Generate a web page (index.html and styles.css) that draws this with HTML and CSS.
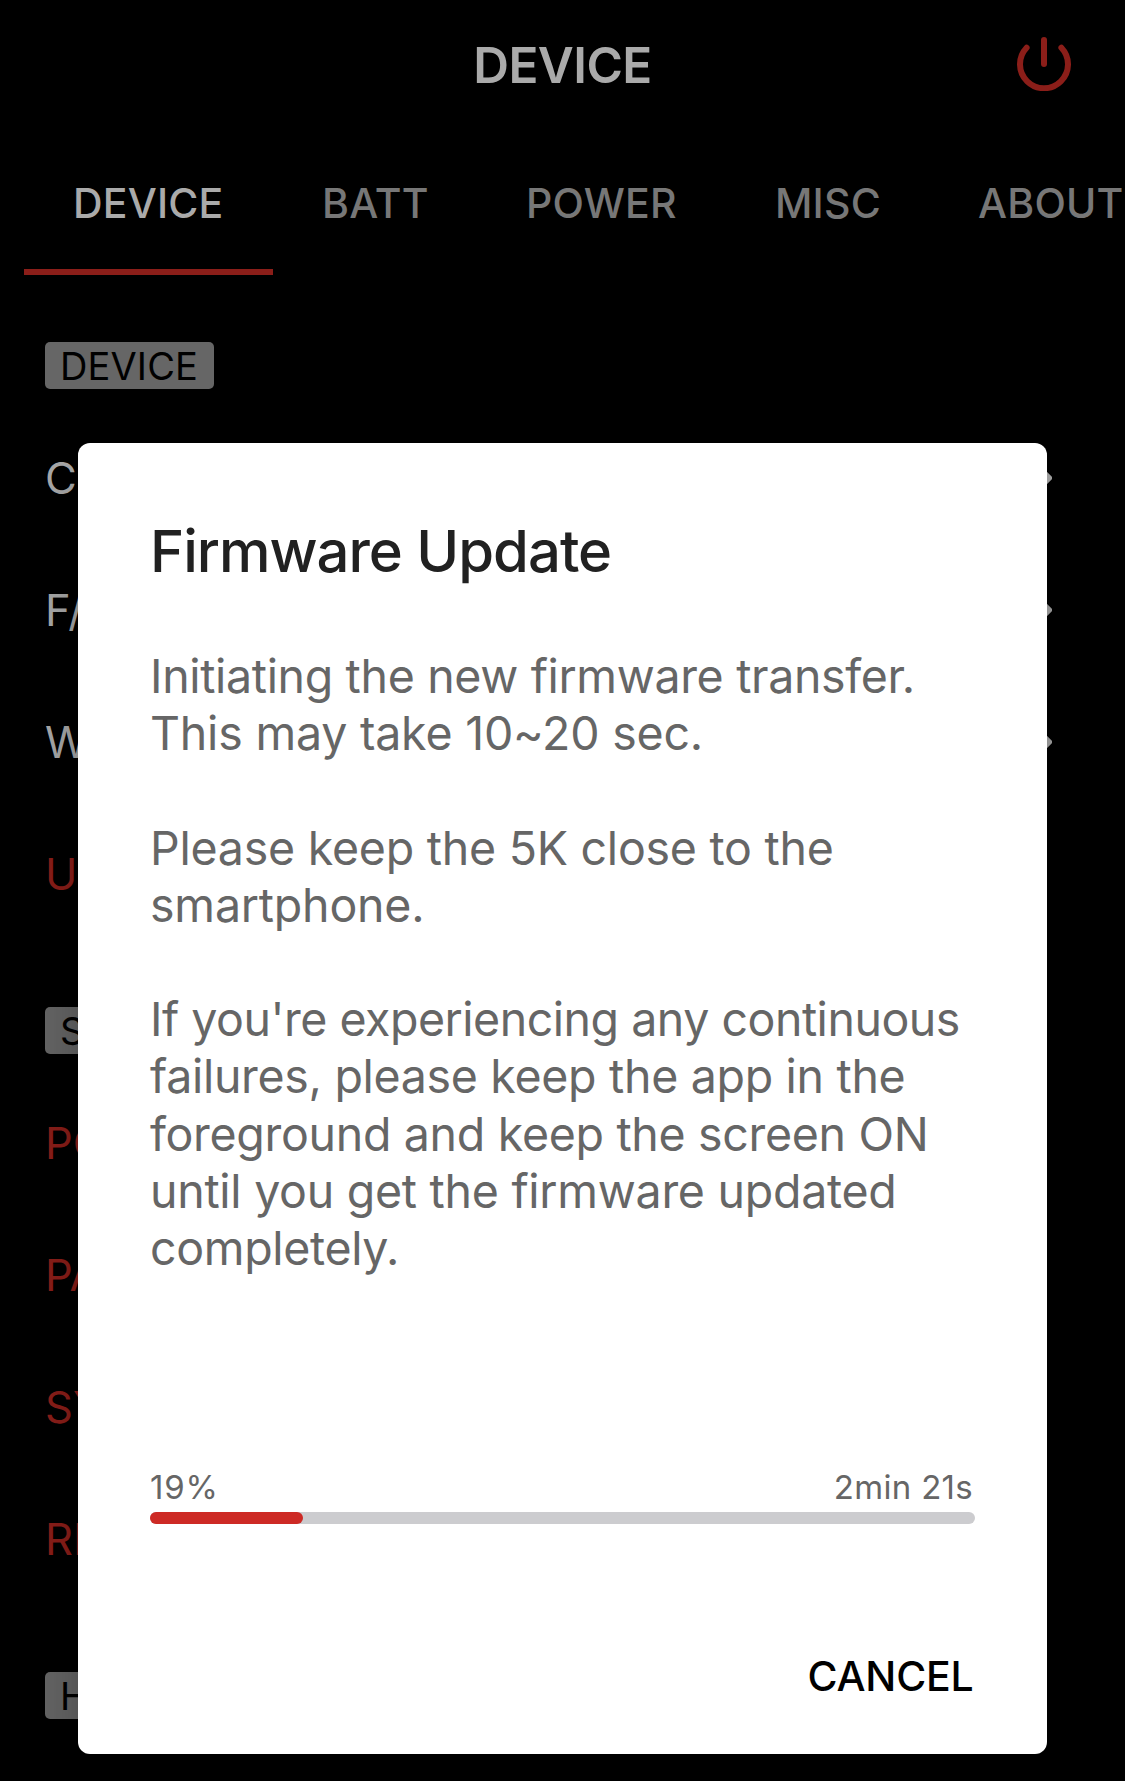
FILE: index.html
```html
<!DOCTYPE html>
<html lang="en">
<head>
<meta charset="utf-8">
<title>Device</title>
<link rel="stylesheet" href="styles.css">
</head>
<body>
<div class="screen">
  <header class="header">
    <h1 class="header-title">DEVICE</h1>
    <svg class="power" viewBox="0 0 54 54" width="54" height="54" fill="none" stroke="#8b1e19" stroke-width="6" stroke-linecap="round">
      <path d="M9.6 10.7A24 24 0 1 0 44.4 10.7"/>
      <path d="M27 3V27"/>
    </svg>
  </header>
  <nav class="tabs">
    <a class="tab tab-wide tab-active">DEVICE</a>
    <a class="tab tab-batt">BATT</a>
    <a class="tab tab-wide">POWER</a>
    <a class="tab tab-misc">MISC</a>
    <a class="tab tab-about">ABOUT</a>
  </nav>
  <main class="content">
    <section class="group">
      <h2 class="badge">DEVICE</h2>
      <div class="row"><span>C</span><svg class="chevron" viewBox="0 0 18 32" width="18" height="32"><path d="M2.5 3.5L15 16L2.5 28.5"/></svg></div>
      <div class="row row-tight"><span>F/</span><svg class="chevron" viewBox="0 0 18 32" width="18" height="32"><path d="M2.5 3.5L15 16L2.5 28.5"/></svg></div>
      <div class="row"><span>W</span><svg class="chevron" viewBox="0 0 18 32" width="18" height="32"><path d="M2.5 3.5L15 16L2.5 28.5"/></svg></div>
      <div class="row row-red"><span>U</span></div>
    </section>
    <section class="group">
      <h2 class="badge">S</h2>
      <div class="row row-red"><span>PO</span></div>
      <div class="row row-red"><span>PA</span></div>
      <div class="row row-red"><span>SY</span></div>
      <div class="row row-red"><span>RE</span></div>
    </section>
    <section class="group">
      <h2 class="badge">H</h2>
    </section>
  </main>

  <div class="dialog" role="dialog">
    <h2 class="dialog-title">Firmware Update</h2>
    <div class="message">
      <p><span class="ls-34">Initiating the new firmware transfer.</span><br><span class="ls-20">This may take 10~20 sec.</span></p>
      <p><span class="ls-24">Please keep the 5K close to the</span><br><span class="ls-20">smartphone.</span></p>
      <p><span class="ls-48">If you're experiencing any continuous</span><br><span class="ls-31">failures, please keep the app in the</span><br><span class="ls-31">foreground and keep the screen ON</span><br><span class="ls-27">until you get the firmware updated</span><br><span class="ls-34">completely.</span></p>
    </div>
    <div class="progress-info"><span class="percent">19%</span><span class="remaining">2min 21s</span></div>
    <div class="progress"><div class="progress-fill"></div></div>
    <button class="cancel">CANCEL</button>
  </div>
</div>
</body>
</html>
```
FILE: styles.css
```css
* { box-sizing: border-box; }
body, h1, h2, p { margin: 0; }
body {
  background: #000;
  font-family: Inter, "Liberation Sans", sans-serif;
}
.screen {
  position: relative;
  width: 1125px;
  height: 1781px;
  overflow: hidden;
  background: #000;
}

/* Header */
.header {
  display: grid;
  grid-template-columns: 1fr auto 1fr;
  align-items: center;
  height: 130px;
  padding: 0 54px;
}
.header-title {
  grid-column: 2;
  font-size: 49.5px;
  font-weight: 600;
  line-height: 60px;
  letter-spacing: -0.58px;
  color: #aaa;
}
.power { justify-self: end; margin-top: -2px; }

/* Tabs */
.tabs {
  display: flex;
  height: 145px;
  padding-left: 24px;
}
.tab {
  flex: none;
  padding: 43px 0 0 49px;
  border-bottom: 6px solid transparent;
  font-size: 41px;
  font-weight: 450;
  line-height: 60px;
  letter-spacing: 0.2px;
  color: #777;
}
.tab-wide { width: 249px; }
.tab-batt { width: 204px; }
.tab-misc { width: 203px; }
.tab-active { color: #aaa; border-color: #8b1e19; }

/* Settings list */
.content { padding: 67px 68px 0 45px; }
.group { height: 665px; }
.badge {
  width: fit-content;
  height: 47px;
  margin-bottom: 22.5px;
  padding: 0 16px 0 15px;
  border-radius: 5px;
  background: #666;
  font-size: 38px;
  font-weight: 400;
  line-height: 48px;
  letter-spacing: 0.11px;
  color: #000;
}
.row {
  display: flex;
  align-items: center;
  justify-content: space-between;
  height: 132px;
  font-size: 43.5px;
  color: #aaa;
}
.row-tight { letter-spacing: -2.5px; }
.row-red { color: #8b1e19; }
.chevron {
  margin-right: 5px;
  fill: none;
  stroke: #aaa;
  stroke-width: 6;
  stroke-linecap: round;
  stroke-linejoin: round;
}

/* Firmware dialog */
.dialog {
  position: absolute;
  left: 78px;
  top: 443px;
  width: 969px;
  height: 1311px;
  padding: 72px 72px 0;
  border-radius: 12px;
  background: #fff;
  box-shadow: 0 30px 60px rgba(0, 0, 0, 0.3);
}
.dialog-title {
  font-size: 58px;
  font-weight: 500;
  line-height: 72px;
  letter-spacing: -1px;
  color: #212121;
}
.message {
  display: flex;
  flex-direction: column;
  gap: 57.2px;
  margin-top: 61px;
  font-size: 46.5px;
  line-height: 57.2px;
  color: #666;
  white-space: nowrap;
}
.ls-20 { letter-spacing: -0.2px; }
.ls-24 { letter-spacing: -0.24px; }
.ls-27 { letter-spacing: -0.27px; }
.ls-31 { letter-spacing: -0.31px; }
.ls-34 { letter-spacing: -0.34px; }
.ls-48 { letter-spacing: -0.48px; }
.progress-info {
  display: flex;
  justify-content: space-between;
  margin-top: 190px;
  padding: 0 2px 0 0;
  font-size: 33px;
  line-height: 40px;
  color: #666;
}
.percent { letter-spacing: 0.8px; }
.remaining { letter-spacing: 0.3px; }
.progress {
  height: 12px;
  margin-top: 5px;
  border-radius: 6px;
  background: #cccccf;
}
.progress-fill {
  width: 153px;
  height: 12px;
  border-radius: 6px;
  background: #cd2a25;
}
.cancel {
  display: block;
  margin: 122px 1.5px 0 auto;
  padding: 0;
  border: 0;
  background: none;
  font: 500 41px/60px Inter, "Liberation Sans", sans-serif;
  letter-spacing: -0.21px;
  color: #000;
}
```
